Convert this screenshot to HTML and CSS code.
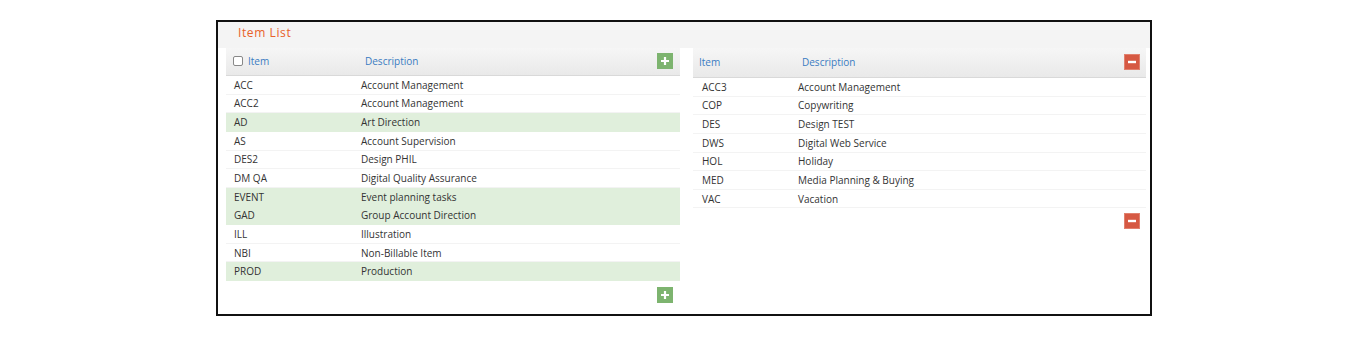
FILE: index.html
```html
<!DOCTYPE html>
<html lang="en">
<head>
<meta charset="UTF-8"/>
<title>Item List</title>
<link rel="stylesheet" href="styles.css">
</head>
<body>
<div class="frame">
<div class="titlebar">Item List</div>
<div class="panels">

<section class="panel panel-left">
<div class="head">
    <span class="c-item"><span class="chk"></span>Item</span>
    <span class="c-desc">Description</span>
    <span class="btn add"><svg width="16" height="16" viewBox="0 0 16 16"><path d="M8 4v8M4 8h8" stroke="#fff" stroke-width="2.2"/></svg></span>
</div>
<div class="rows">
    <div class="row"><span class="c-item">ACC</span><span class="c-desc">Account Management</span></div>
    <div class="row"><span class="c-item">ACC2</span><span class="c-desc">Account Management</span></div>
    <div class="row sel"><span class="c-item">AD</span><span class="c-desc">Art Direction</span></div>
    <div class="row"><span class="c-item">AS</span><span class="c-desc">Account Supervision</span></div>
    <div class="row"><span class="c-item">DES2</span><span class="c-desc">Design PHIL</span></div>
    <div class="row"><span class="c-item">DM QA</span><span class="c-desc">Digital Quality Assurance</span></div>
    <div class="row sel"><span class="c-item">EVENT</span><span class="c-desc">Event planning tasks</span></div>
    <div class="row sel"><span class="c-item">GAD</span><span class="c-desc">Group Account Direction</span></div>
    <div class="row"><span class="c-item">ILL</span><span class="c-desc">Illustration</span></div>
    <div class="row"><span class="c-item">NBI</span><span class="c-desc">Non-Billable Item</span></div>
    <div class="row sel"><span class="c-item">PROD</span><span class="c-desc">Production</span></div>
</div>
<div class="foot">
    <span class="btn add"><svg width="16" height="16" viewBox="0 0 16 16"><path d="M8 4v8M4 8h8" stroke="#fff" stroke-width="2.2"/></svg></span>
</div>
</section>

<section class="panel panel-right">
<div class="head">
    <span class="c-item">Item</span>
    <span class="c-desc">Description</span>
    <span class="btn del"><svg width="16" height="16" viewBox="0 0 16 16"><path d="M4 8h8" stroke="#fff" stroke-width="2.4"/></svg></span>
</div>
<div class="rows">
    <div class="row"><span class="c-item">ACC3</span><span class="c-desc">Account Management</span></div>
    <div class="row"><span class="c-item">COP</span><span class="c-desc">Copywriting</span></div>
    <div class="row"><span class="c-item">DES</span><span class="c-desc">Design TEST</span></div>
    <div class="row"><span class="c-item">DWS</span><span class="c-desc">Digital Web Service</span></div>
    <div class="row"><span class="c-item">HOL</span><span class="c-desc">Holiday</span></div>
    <div class="row"><span class="c-item">MED</span><span class="c-desc">Media Planning &amp; Buying</span></div>
    <div class="row"><span class="c-item">VAC</span><span class="c-desc">Vacation</span></div>
</div>
<div class="foot">
    <span class="btn del"><svg width="16" height="16" viewBox="0 0 16 16"><path d="M4 8h8" stroke="#fff" stroke-width="2.4"/></svg></span>
</div>
</section>

</div>
</div>
</body>
</html>
```

FILE: styles.css
```css
body
{
margin:0;
padding:0;
background:#fff;
font-family: "Open Sans", Arial, sans-serif;
font-size:10px;
color:#333;
}

.frame
{
box-sizing:border-box;
margin:20px 0 0 216px;
width:936px;
height:296px;
border:2px solid #111;
}

.titlebar
{
height:26px;
line-height:22px;
padding-left:20px;
background:#f4f4f4;
color:#e8622a;
font-size:12px;
letter-spacing:0.6px;
}

.panels
{
display:flex;
gap:13px;
padding:0 4px 0 8px;
}

.panel-left { width:454px; }
.panel-right { width:453px; }

.head
{
box-sizing:border-box;
display:flex;
align-items:center;
height:28px;
padding-bottom:1px;
background:linear-gradient(#f6f6f6, #e9e9e9);
border-bottom:1px solid #d9d9d9;
color:#3a7cc2;
}

.panel-right .head { height:30px; }

.head .c-item
{
display:flex;
align-items:center;
}

.panel-left .head .c-item { width:139px; padding-left:7px; box-sizing:border-box; }
.panel-right .head .c-item { width:109px; padding-left:6px; box-sizing:border-box; }

.head .c-desc { flex:1; }

.chk
{
display:inline-block;
box-sizing:border-box;
width:10px;
height:10px;
margin-right:5px;
border:1px solid #888;
border-radius:2px;
background:#fff;
}

.row
{
box-sizing:border-box;
display:flex;
align-items:center;
height:18.65px;
border-bottom:1px solid #f3f3f3;
}

.row.sel
{
background:#e0efdc;
border-bottom-color:#e0efdc;
}

.panel-left .row .c-item { width:135px; padding-left:8px; box-sizing:border-box; }
.panel-right .row .c-item { width:105px; padding-left:9px; box-sizing:border-box; }

.btn
{
display:block;
width:16px;
height:16px;
}

.btn svg { display:block; }

.btn.add { background:#7db46f; }
.btn.del { background:#d65943; box-shadow:inset 0 0 0 1px #e1806d; }

.panel-left .head .btn { margin-right:7px; }
.panel-right .head .btn { margin-right:6px; }

.foot
{
display:flex;
justify-content:flex-end;
}

.panel-left .foot { padding:6px 7px 0 0; }
.panel-right .foot { padding:5px 6px 0 0; }
```
